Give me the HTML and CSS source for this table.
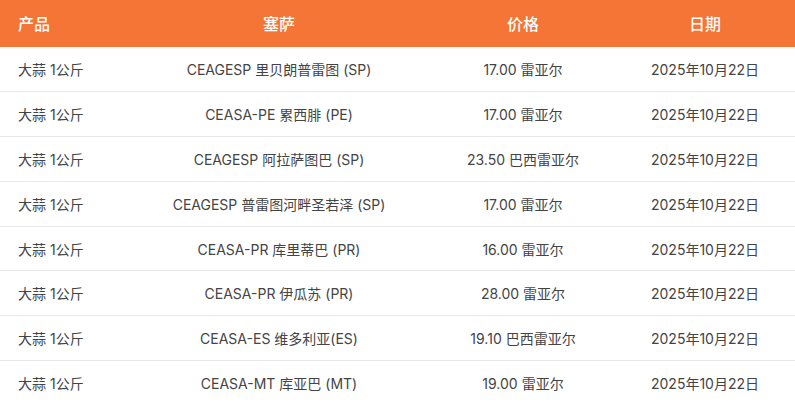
FILE: index.html
```html
<!DOCTYPE html>
<html lang="zh">
<head>
<meta charset="utf-8">
<link rel="stylesheet" href="styles.css">
</head>
<body>
<table class="prices">
  <colgroup>
    <col class="c1"><col class="c2"><col class="c3"><col class="c4">
  </colgroup>
  <thead>
    <tr><th class="left">产品</th><th>塞萨</th><th>价格</th><th>日期</th></tr>
  </thead>
  <tbody>
    <tr><td class="left">大蒜 1公斤</td><td>CEAGESP 里贝朗普雷图 (SP)</td><td>17.00 雷亚尔</td><td>2025年10月22日</td></tr>
    <tr><td class="left">大蒜 1公斤</td><td>CEASA-PE 累西腓 (PE)</td><td>17.00 雷亚尔</td><td>2025年10月22日</td></tr>
    <tr><td class="left">大蒜 1公斤</td><td>CEAGESP 阿拉萨图巴 (SP)</td><td>23.50 巴西雷亚尔</td><td>2025年10月22日</td></tr>
    <tr><td class="left">大蒜 1公斤</td><td>CEAGESP 普雷图河畔圣若泽 (SP)</td><td>17.00 雷亚尔</td><td>2025年10月22日</td></tr>
    <tr><td class="left">大蒜 1公斤</td><td>CEASA-PR 库里蒂巴 (PR)</td><td>16.00 雷亚尔</td><td>2025年10月22日</td></tr>
    <tr><td class="left">大蒜 1公斤</td><td>CEASA-PR 伊瓜苏 (PR)</td><td>28.00 雷亚尔</td><td>2025年10月22日</td></tr>
    <tr><td class="left">大蒜 1公斤</td><td>CEASA-ES 维多利亚(ES)</td><td>19.10 巴西雷亚尔</td><td>2025年10月22日</td></tr>
    <tr><td class="left">大蒜 1公斤</td><td>CEASA-MT 库亚巴 (MT)</td><td>19.00 雷亚尔</td><td>2025年10月22日</td></tr>
  </tbody>
</table>
</body>
</html>
```

FILE: styles.css
```css
html, body {
  margin: 0;
  padding: 0;
  background: #ffffff;
}
body {
  font-family: Inter, "Noto Sans CJK SC", sans-serif;
  color: #444444;
}
.prices {
  width: 795px;
  border-collapse: collapse;
  table-layout: fixed;
}
.c1 { width: 127px; }
.c2 { width: 304px; }
.c3 { width: 184px; }
.c4 { width: 180px; }
.prices th {
  background: #f47536;
  color: #ffffff;
  font-weight: 500;
  font-size: 16px;
  height: 46px;
  padding: 0 0 1px;
  text-align: center;
}
.prices td {
  font-size: 14px;
  height: 44.8px;
  box-sizing: border-box;
  padding: 0;
  text-align: center;
  border-bottom: 1px solid #e8e8e8;
  white-space: nowrap;
}
.prices .left {
  text-align: left;
  padding-left: 18px;
}
```
